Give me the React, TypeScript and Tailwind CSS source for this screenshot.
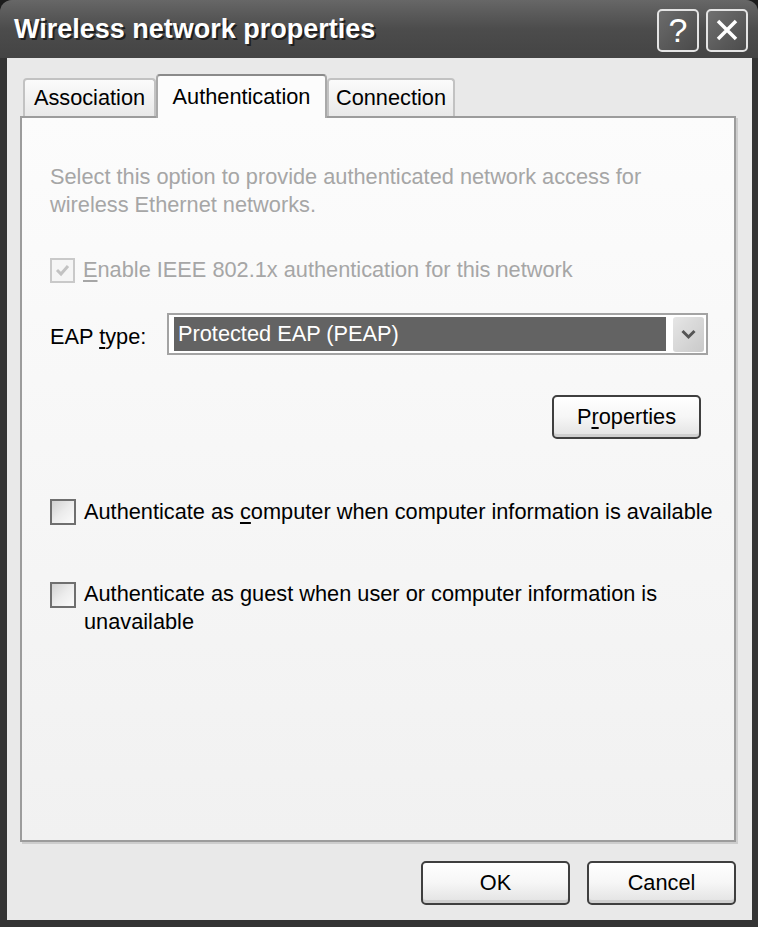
import React from 'react'

function CheckBox({ checked, disabled }: { checked?: boolean; disabled?: boolean }) {
  return (
    <span
      className={
        disabled
          ? 'w-[25px] h-[25px] shrink-0 border-2 border-[#c9c9c9] bg-[#f5f5f5] flex items-center justify-center'
          : 'w-[26px] h-[26px] shrink-0 border-2 border-[#6f6f6f] bg-gradient-to-br from-[#d2d2d2] via-[#ececec] to-[#fbfbfb] flex items-center justify-center'
      }
    >
      {checked && (
        <svg width="15" height="13" viewBox="0 0 15 13">
          <path d="M2 6 L6 10 L13 2" fill="none" stroke="#c2c2c2" strokeWidth="3" />
        </svg>
      )}
    </span>
  )
}

function XpButton({ children, className }: { children: React.ReactNode; className?: string }) {
  return (
    <button
      type="button"
      className={`h-[44px] w-[149px] rounded-[5px] border-2 border-[#3f3f3f] bg-gradient-to-b from-white via-[#f6f6f6] to-[#e2e2e2] shadow-[inset_0_-3px_0_#cfcfcf] text-[21.75px] text-black flex items-center justify-center ${className ?? ''}`}
    >
      {children}
    </button>
  )
}

function Tab({ label, selected, width }: { label: string; selected?: boolean; width: string }) {
  if (selected) {
    return (
      <div
        className={`${width} h-[44px] -mb-[2px] relative z-10 rounded-t-[4px] border-2 border-b-0 border-[#a9a9a9] border-t-[#8a8a8a] bg-[#fcfcfc] flex items-start justify-center pt-[5px] text-[21.75px] text-black`}
      >
        {label}
      </div>
    )
  }
  return (
    <div
      className={`${width} h-[38px] rounded-t-[4px] border-2 border-b-0 border-[#c2c2c2] bg-gradient-to-b from-[#fbfbfb] to-[#e9e9e9] flex items-center justify-center text-[21.75px] text-black`}
    >
      {label}
    </div>
  )
}

export default function App() {
  return (
    <div className="w-[758px] h-[927px] bg-[#1c1c1c] flex flex-col font-['Liberation_Sans',Arial,sans-serif] select-none">
      <div className="flex-1 flex flex-col rounded-t-[12px] bg-[#343434] overflow-hidden">
        {/* title bar */}
        <div className="h-[58px] shrink-0 flex items-center pl-[14px] pr-[10px] bg-gradient-to-b from-[#676767] via-[#4c4c4c] to-[#444444]">
          <span className="text-white font-bold text-[27px] [text-shadow:2px_2px_0_#1f1f1f]">
            Wireless network properties
          </span>
          <div className="ml-auto flex gap-[7px] pt-[2px]">
            <div className="w-[42px] h-[43px] rounded-[5px] border-2 border-[#e4e4e4] bg-gradient-to-br from-[#6c6c6c] to-[#4a4a4a] flex items-center justify-center text-white text-[34px] leading-none">
              ?
            </div>
            <div className="w-[42px] h-[43px] rounded-[5px] border-2 border-[#e4e4e4] bg-gradient-to-br from-[#707070] to-[#4c4c4c] flex items-center justify-center">
              <svg width="24" height="24" viewBox="0 0 24 24">
                <path d="M3 3 L21 21 M21 3 L3 21" stroke="white" strokeWidth="3.5" />
              </svg>
            </div>
          </div>
        </div>

        {/* body */}
        <div className="flex-1 flex flex-col ml-[7px] mr-[6px] mb-[7px] bg-[#e9e9e9] pt-[16px] pl-[13px] pr-[16px]">
          <div className="h-[42px] flex items-end pl-[3px]">
            <Tab label="Association" width="w-[133px]" />
            <Tab label="Authentication" width="w-[171px]" selected />
            <Tab label="Connection" width="w-[128px]" />
          </div>

          <div className="h-[726px] border-2 border-[#9c9c9c] shadow-[2px_2px_0_#cdcdcd] bg-gradient-to-b from-[#fcfcfc] to-[#f1f1f1] flex flex-col pl-[28px] pr-[26px] pt-[45px] text-[21.75px] text-black">
            <p className="leading-[28px] text-[#a6a6a6] whitespace-nowrap">
              Select this option to provide authenticated network access for
              <br />
              wireless Ethernet networks.
            </p>

            <div className="mt-[37px] h-[28px] flex items-center gap-[8px] text-[#a6a6a6]">
              <CheckBox checked disabled />
              <span>
                <span className="underline underline-offset-[3px]">E</span>nable IEEE 802.1x authentication for this network
              </span>
            </div>

            <div className="mt-[29px] flex items-center">
              <span className="w-[117px] shrink-0 pt-[6px]">
                EAP <span className="underline underline-offset-[3px]">t</span>ype:
              </span>
              <div className="flex-1 h-[42px] border-2 border-[#a3a3a3] bg-white flex items-center pl-[5px] pr-[2px]">
                <div className="flex-1 h-[34px] bg-[#636363] text-white flex items-center pl-[4px]">
                  Protected EAP (PEAP)
                </div>
                <div className="ml-[7px] w-[31px] h-[35px] rounded-[3px] bg-gradient-to-br from-[#e6e6e6] to-[#c9c9c9] flex items-center justify-center">
                  <svg width="15" height="11" viewBox="0 0 15 11">
                    <path d="M1.5 2 L7.5 8 L13.5 2" fill="none" stroke="#555555" strokeWidth="3" />
                  </svg>
                </div>
              </div>
            </div>

            <div className="mt-[40px] flex justify-end pr-[7px]">
              <XpButton>
                P<span className="underline underline-offset-[3px]">r</span>operties
              </XpButton>
            </div>

            <div className="mt-[59px] flex items-start gap-[8px] leading-[28px]">
              <span className="mt-[1px]">
                <CheckBox />
              </span>
              <span className="whitespace-nowrap">
                Authenticate as <span className="underline underline-offset-[3px]">c</span>omputer when computer information is available
              </span>
            </div>

            <div className="mt-[54px] flex items-start gap-[8px] leading-[28px]">
              <span className="mt-[2px]">
                <CheckBox />
              </span>
              <span className="whitespace-nowrap">
                Authenticate as <span className="underline underline-offset-[3px]">g</span>uest when user or computer information is
                <br />
                unavailable
              </span>
            </div>
          </div>

          <div className="mt-[19px] flex justify-end gap-[17px]">
            <XpButton className="h-[42px]">OK</XpButton>
            <XpButton className="h-[42px]">Cancel</XpButton>
          </div>
        </div>
      </div>
    </div>
  )
}
